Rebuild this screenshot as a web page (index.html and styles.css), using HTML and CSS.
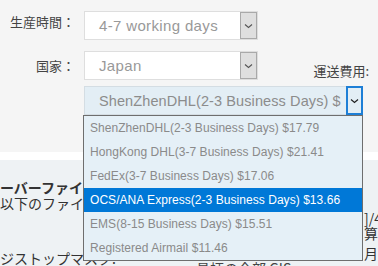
FILE: index.html
```html
<!DOCTYPE html>
<html lang="ja">
<head>
<meta charset="utf-8">
<link rel="stylesheet" href="styles.css">
</head>
<body>
<div class="top">
  <div class="row row1">
    <div class="label label1">生産時間：</div>
    <div class="select">
      <span class="value">4-7 working days</span>
      <span class="arrow"><svg width="9" height="6" viewBox="0 0 9 6"><path d="M1 1.5 L4.5 4.5 L8 1.5" fill="none" stroke="#555" stroke-width="1.1"/></svg></span>
    </div>
  </div>
  <div class="row row2">
    <div class="label">国家：</div>
    <div class="select">
      <span class="value">Japan</span>
      <span class="arrow"><svg width="9" height="6" viewBox="0 0 9 6"><path d="M1 1.5 L4.5 4.5 L8 1.5" fill="none" stroke="#555" stroke-width="1.1"/></svg></span>
    </div>
    <div class="ship-label">運送費用:</div>
  </div>
  <div class="row row3">
    <div class="select big">
      <span class="value">ShenZhenDHL(2-3 Business Days) $</span>
      <span class="arrow focus"><svg width="9" height="6" viewBox="0 0 9 6"><path d="M1 1.5 L4.5 4.5 L8 1.5" fill="none" stroke="#222" stroke-width="1.2"/></svg></span>
    </div>
  </div>
</div>
<div class="band"></div>
<div class="lower">
  <div class="col-left">
    <div class="heading">ーバーファイル</div>
    <div class="text">以下のファイル</div>
    <div class="text mask">ジストップマスク:</div>
  </div>
  <div class="col-mid">
    <div class="text">具柄の全部 GIS</div>
  </div>
  <div class="col-right">
    <div class="text r1">]/4</div>
    <div class="text r2">算</div>
    <div class="text r3">月1</div>
  </div>
</div>
<ul class="dropdown">
  <li>ShenZhenDHL(2-3 Business Days) $17.79</li>
  <li>HongKong DHL(3-7 Business Days) $21.41</li>
  <li>FedEx(3-7 Business Days) $17.06</li>
  <li class="active">OCS/ANA Express(2-3 Business Days) $13.66</li>
  <li>EMS(8-15 Business Days) $15.51</li>
  <li>Registered Airmail $11.46</li>
</ul>
</body>
</html>
```
FILE: styles.css
```css
html, body {
  margin: 0;
  padding: 0;
}
body {
  width: 378px;
  height: 266px;
  overflow: hidden;
  background: #eef2f4;
  font-family: "Liberation Sans", "Noto Sans CJK JP", sans-serif;
  position: relative;
}
.top {
  background: #f5f5f5;
  height: 152px;
  box-sizing: border-box;
  padding-top: 11px;
}
.row {
  display: flex;
  align-items: center;
}
.row1 { height: 29px; margin-bottom: 11px; }
.row2 { height: 29px; }
.row3 { height: 29px; margin-top: 6px; }
.label {
  width: 75px;
  margin-right: 9px;
  text-align: right;
  font-family: "Noto Sans CJK JP", sans-serif;
  font-size: 13px;
  color: #444;
  line-height: 14px;
}
.label1 { align-self: flex-start; padding-top: 4px; }
.select {
  width: 174px;
  height: 29px;
  box-sizing: border-box;
  border: 1px solid #dedede;
  background: #fff;
  display: flex;
  align-items: center;
  justify-content: space-between;
}
.value {
  padding-left: 14px;
  font-size: 15px;
  letter-spacing: 0.35px;
  color: #999;
  white-space: nowrap;
  overflow: hidden;
  min-width: 0;
}
.arrow {
  flex: none;
  width: 17px;
  height: 27px;
  box-sizing: border-box;
  border: 1px solid #a9a9a9;
  background: #dfdfdf;
  display: flex;
  align-items: center;
  justify-content: center;
}
.ship-label {
  margin-left: auto;
  margin-right: 9px;
  padding-top: 9px;
  font-family: "Noto Sans CJK JP", sans-serif;
  font-size: 13px;
  color: #444;
}
.big {
  margin-left: 84px;
  width: 279px;
  background: #e3eef5;
  border-color: #d4dde3;
}
.big .value {
  color: #8c8c8c;
  font-size: 14.5px;
  letter-spacing: 0.1px;
}
.arrow.focus {
  width: 17px;
  height: 29px;
  margin: -1px -1px -1px 0;
  border: 2px solid #1e7fd6;
  background: #e3eef5;
}
.band {
  height: 8px;
  background: #fff;
}
.lower {
  display: grid;
  grid-template-columns: 196px 168px 1fr;
  font-family: "Noto Sans CJK JP", sans-serif;
  color: #333;
}
.col-left { padding-top: 19px; }
.heading {
  font-size: 14px;
  font-weight: bold;
  line-height: 16px;
  color: #333;
}
.text {
  font-size: 14px;
  line-height: 16px;
  white-space: nowrap;
}
.col-left .mask { margin-top: 39px; }
.col-mid { padding-top: 100px; color: #444; }
.col-right { padding-top: 50px; }
.r2 { margin-top: -1px; }
.r3 { margin-top: 4px; }
.dropdown {
  position: absolute;
  left: 83px;
  top: 115px;
  width: 280px;
  margin: 0;
  padding: 0;
  list-style: none;
  box-sizing: border-box;
  border: 1px solid #6e6e6e;
  background: #e5f0f7;
}
.dropdown li {
  height: 24px;
  line-height: 24px;
  padding-left: 6px;
  font-size: 12px;
  letter-spacing: 0.05px;
  color: #8a8a8a;
  white-space: nowrap;
}
.dropdown li.active {
  background: #0078d7;
  color: #fff;
}
```
